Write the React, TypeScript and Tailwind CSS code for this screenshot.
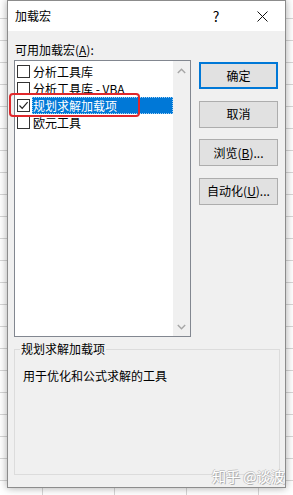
import React from "react";

const font = { fontFamily: '"Noto Sans CJK SC", "Noto Sans", sans-serif' };

function Checkbox({ checked }: { checked?: boolean }) {
  return (
    <div className="w-[13px] h-[13px] shrink-0 border border-[#333333] bg-white flex items-center justify-center">
      {checked && (
        <svg width="11" height="11" viewBox="0 0 11 11">
          <path d="M1.5 5.5 L4.2 8.3 L9.6 2.2" fill="none" stroke="#222" strokeWidth="1.2" />
        </svg>
      )}
    </div>
  );
}

function Item({ label, checked, selected }: { label: string; checked?: boolean; selected?: boolean }) {
  return (
    <div className="h-[17px] flex items-center pl-[2px]">
      <Checkbox checked={checked} />
      <div
        className={
          selected
            ? "ml-[2px] flex-1 h-[17px] flex items-center pl-[1px] bg-[#0078d7] text-white outline-1 outline-dotted outline-[#9fd0f5] -outline-offset-1"
            : "ml-[2px] flex-1 h-[17px] flex items-center pl-[1px] text-black"
        }
      >
        <span className="text-[12px] leading-[16px] whitespace-nowrap">{label}</span>
      </div>
    </div>
  );
}

function Btn({ label, primary }: { label: React.ReactNode; primary?: boolean }) {
  return (
    <div
      className={
        primary
          ? "w-[79px] h-[27px] bg-[#e1e1e1] border-2 border-[#0078d7] flex items-center justify-center text-[12px] text-black"
          : "w-[79px] h-[27px] bg-[#e1e1e1] border border-[#adadad] flex items-center justify-center text-[12px] text-black"
      }
    >
      {label}
    </div>
  );
}

export default function App() {
  return (
    <div
      style={font}
      className="relative w-[293px] h-[495px] overflow-hidden bg-white bg-[linear-gradient(to_bottom,#d6d6d6_1px,transparent_1px),linear-gradient(to_right,#d6d6d6_1px,transparent_1px)] bg-[size:72px_22px] bg-[position:42px_18px] pl-[7px]"
    >
      <div className="w-[279px] h-[488px] bg-[#f0f0f0] border border-[#8c8c8c] shadow-[0_0_8px_rgba(0,0,0,0.35)] flex flex-col">
        {/* Title bar */}
        <div className="h-[30px] bg-white flex items-center shrink-0">
          <span className="pl-[7px] text-[12px] text-black">加载宏</span>
          <div className="flex-1" />
          <div className="w-[46px] h-[30px] flex items-center justify-center text-[14px] text-black">?</div>
          <div className="w-[46px] h-[30px] flex items-center justify-center">
            <svg width="11" height="11" viewBox="0 0 11 11">
              <path d="M0.5 0.5 L10.5 10.5 M10.5 0.5 L0.5 10.5" stroke="#111" strokeWidth="1" />
            </svg>
          </div>
        </div>

        {/* Body */}
        <div className="flex flex-col px-[6px] pt-[11px]">
          <div className="pl-[1px] text-[12px] leading-[16px] text-black">
            可用加载宏(<span className="underline">A</span>):
          </div>
          <div className="flex mt-[2px]">
            {/* List box */}
            <div className="w-[177px] h-[277px] border border-[#828790] bg-white flex">
              <div className="flex-1 flex flex-col pt-[2px]">
                <Item label="分析工具库" />
                <Item label="分析工具库 - VBA" />
                <Item label="规划求解加载项" checked selected />
                <Item label="欧元工具" />
              </div>
              <div className="w-[17px] bg-[#f0f0f0] flex flex-col justify-between">
                <div className="h-[17px] flex items-center justify-center pt-[3px]">
                  <svg width="9" height="6" viewBox="0 0 9 6">
                    <path d="M0.8 5 L4.5 1.2 L8.2 5" fill="none" stroke="#a6a6a6" strokeWidth="1.4" />
                  </svg>
                </div>
                <div className="h-[17px] flex items-center justify-center pb-[2px]">
                  <svg width="9" height="6" viewBox="0 0 9 6">
                    <path d="M0.8 1 L4.5 4.8 L8.2 1" fill="none" stroke="#a6a6a6" strokeWidth="1.4" />
                  </svg>
                </div>
              </div>
            </div>
            {/* Buttons */}
            <div className="ml-[8px] mt-[2px] flex flex-col gap-[11.5px]">
              <Btn label="确定" primary />
              <Btn label="取消" />
              <Btn
                label={
                  <span>
                    浏览(<span className="underline">B</span>)...
                  </span>
                }
              />
              <Btn
                label={
                  <span>
                    自动化(<span className="underline">U</span>)...
                  </span>
                }
              />
            </div>
          </div>

          {/* Group box */}
          <div className="relative mt-[12px] w-[266px] h-[126px] border border-[#dcdcdc] pt-[18px] pl-[8px]">
            <span className="absolute -top-[9px] left-[5px] px-[1px] bg-[#f0f0f0] text-[12px] leading-[16px] text-black">
              规划求解加载项
            </span>
            <div className="text-[12px] leading-[16px] text-black">用于优化和公式求解的工具</div>
          </div>
        </div>
      </div>

      {/* Red annotation */}
      <div className="absolute left-[9px] top-[93px] w-[131px] h-[24px] border-[2.5px] border-[#e0282c] rounded-[4px]" />

      {/* Watermark */}
      <div className="absolute left-[212px] top-[467px] text-[14px] leading-[18px] text-white [text-shadow:1px_1px_0_#b0b0b0,-1px_0_0_#c8c8c8,0_-1px_0_#c8c8c8] whitespace-nowrap">
        知乎 @谈波
      </div>
    </div>
  );
}
